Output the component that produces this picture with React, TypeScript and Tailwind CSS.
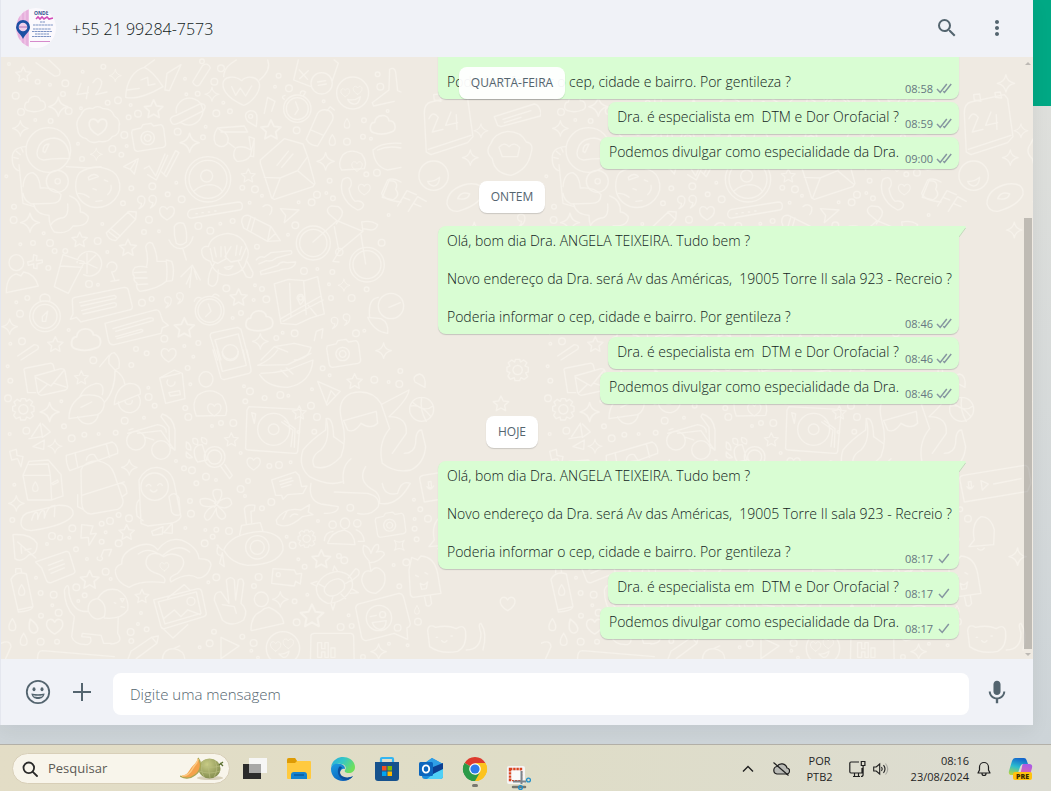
import clsx from 'clsx'
import type { ReactNode } from 'react'
import { MdMoreVert, MdSearch } from 'react-icons/md'

type Message = { id: number; text: string; time: string; read: boolean; tail?: boolean; wide?: boolean }
type Day = { label: string; floating?: boolean; messages: Message[] }

const GREETING = `Olá, bom dia Dra. ANGELA TEIXEIRA. Tudo bem ?

Novo endereço da Dra. será Av das Américas,  19005 Torre II sala 923 - Recreio ?

Poderia informar o cep, cidade e bairro. Por gentileza ?`
const ADDRESS = '\n\nPoderia informar o cep, cidade e bairro. Por gentileza ?'
const SPECIALIST = 'Dra. é especialista em  DTM e Dor Orofacial ?'
const PUBLISH = 'Podemos divulgar como especialidade da Dra.'

const days: Day[] = [
  {
    label: 'QUARTA-FEIRA',
    floating: true,
    messages: [
      { id: 1, text: ADDRESS, time: '08:58', read: true, wide: true },
      { id: 2, text: SPECIALIST, time: '08:59', read: true },
      { id: 3, text: PUBLISH, time: '09:00', read: true },
    ],
  },
  {
    label: 'ONTEM',
    messages: [
      { id: 4, text: GREETING, time: '08:46', read: true, tail: true, wide: true },
      { id: 5, text: SPECIALIST, time: '08:46', read: true },
      { id: 6, text: PUBLISH, time: '08:46', read: true },
    ],
  },
  {
    label: 'HOJE',
    messages: [
      { id: 7, text: GREETING, time: '08:17', read: false, tail: true, wide: true },
      { id: 8, text: SPECIALIST, time: '08:17', read: false },
      { id: 9, text: PUBLISH, time: '08:17', read: false },
    ],
  },
]

/* ---------- wallpaper ---------- */

const STAR = 'M0-22 L7-7 L23-5 L11 6 L14 22 L0 14 L-14 22 L-11 6 L-23-5 L-7-7 Z'
const SPARK = 'M0-26 Q3-4 26 0 Q4 4 0 26 Q-4 4-26 0 Q-4-4 0-26 Z'
const HEART = 'M0 22 C-14 14-24 4-22-8 C-20-20-6-22 0-10 C6-22 20-20 22-8 C24 4 14 14 0 22 Z'
const DROP = 'M0-18 C8-6 11 2 10 8 A10 10 0 0 1-10 8 C-11 2-8-6 0-18 Z'
const CLOUD = 'M-22 22 C-36 18-32-4-20-4 C-18-26 14-26 16-8 C34-8 36 16 22 20 C8 26-10 26-22 22 Z'
const QUOTE = 'M0-18 A11 11 0 1 0 2 4 Q2 12-6 20 Q12 12 12-6 A12 12 0 0 0 0-18 Z'
const CAMERA = 'M-46-22 L-20-28 L-14-38 L10-42 L18-34 L40-38 Q46-36 48-26 L54 20 Q54 28 46 30 L-30 42 Q-38 42-40 34 L-48-14 Z M0-18 A20 20 0 1 0 .1-18 M0-8 A10 10 0 1 0 .1-8'
const GEAR = 'M-6-32 L6-32 L9-24 L18-30 L28-22 L22-12 L32-8 L32 6 L24 9 L30 20 L20 28 L10 23 L6 32 L-8 32 L-10 23 L-22 28 L-29 18 L-23 8 L-32 4 L-32-8 L-23-12 L-28-22 L-18-30 L-9-24 Z M0-14 A14 14 0 1 0 .1-14'

type Spot = [shape: string, x: number, y: number, scale?: number, turn?: number]

const upperSpots: Spot[] = [
  [STAR, 67, 42], [STAR, 458, 146, 1.2], [STAR, 810, 208, 1.3], [STAR, 742, 346, 0.9], [STAR, 236, 538], [STAR, 381, 562, 1.1],
  [STAR, 713, 711, 1.1], [STAR, 550, 802, 1.3], [STAR, 163, 852], [SPARK, 172, 140, 1.1], [SPARK, 343, 47, 0.7], [SPARK, 58, 205, 0.9],
  [SPARK, 566, 248, 1.1], [SPARK, 633, 103, 0.8], [SPARK, 286, 283, 0.7], [SPARK, 974, 304], [SPARK, 87, 488, 1.1], [SPARK, 1029, 676, 0.7],
  [SPARK, 26, 800, 0.9], [SPARK, 778, 844, 0.9], [SPARK, 1148, 872, 0.9], [SPARK, 1440, 212, 0.8], [SPARK, 1395, 70], [SPARK, 1408, 293, 0.9],
  [HEART, 291, 199, 1.2], [HEART, 498, 458, 1], [HEART, 1068, 318, 0.7], [HEART, 1090, 387, 0.8], [HEART, 503, 884], [HEART, 1033, 97, 0.6], [HEART, 1070, 90, 0.6],
  [CLOUD, 102, 130], [CLOUD, 1145, 192, 1.2], [CLOUD, 775, 780, 1.3], [CLOUD, 255, 836, 1.4], [QUOTE, 420, 426, 1], [QUOTE, 454, 424, 1],
  [QUOTE, 500, 726, 0.9], [QUOTE, 536, 714, 0.9], [QUOTE, 1000, 788, 0.9], [QUOTE, 1036, 778, 0.9], [DROP, 1038, 190, 0.8], [DROP, 994, 240, 0.9],
  [CAMERA, 440, 232], [CAMERA, 1025, 880], [STAR, 1500, 430], [SPARK, 1420, 510, 0.9], [QUOTE, 1560, 480], [CAMERA, 1530, 640],
]
const lowerSpots: Spot[] = [
  [STAR, 241, 82, 0.9], [STAR, 1061, 93, 1], [STAR, 691, 268, 0.9], [STAR, 895, 187, 0.9], [STAR, 377, 546, 1], [STAR, 961, 626, 1.2],
  [STAR, 266, 688, 1.2], [STAR, 423, 738, 0.9], [STAR, 933, 796, 1.5], [SPARK, 146, 186, 1.1], [SPARK, 162, 289, 0.8], [SPARK, 385, 352, 0.9],
  [SPARK, 46, 460, 0.9], [SPARK, 1195, 586, 0.8, 45], [SPARK, 838, 748, 0.9], [SPARK, 1133, 905, 0.9], [HEART, 758, 340, 0.9], [HEART, 161, 828, 1.1],
  [HEART, 640, 178, 0.9], [HEART, 490, 649, 0.6], [DROP, 34, 824], [DROP, 95, 828, 1.2, -20], [DROP, 68, 868], [DROP, 62, 720, 0.9], [DROP, 103, 410, 0.8],
  [DROP, 1248, 780, 0.7], [GEAR, 67, 178], [GEAR, 917, 566, 0.8], [CAMERA, 1166, 524, 0.9], [HEART, 824, 888, 0.7], [HEART, 862, 880, 0.7],
  [STAR, 1500, 160], [GEAR, 1550, 60], [SPARK, 1430, 620], [HEART, 1520, 760],
]

const upperDots = '24,12 110,65 193,70 245,35 307,20 44,107 147,74 186,102 60,156 103,180 149,183 203,153 240,145 320,128 351,121 389,135 383,172 411,161 552,56 603,4 660,25 556,103 590,101 640,65 667,128 687,154 646,160 614,200 606,232 530,215 822,80 833,47 864,85 968,124 1130,43 1138,80 1160,153 1089,181 887,211 1110,236 1086,230 1038,245 231,251 243,297 334,267 377,258 361,284 370,225 16,349 391,385 454,379 526,368 500,403 542,418 746,428 724,383 762,388 783,407 986,362 948,404 976,399 996,415 932,427 893,427 1096,343 1128,338 1163,465 39,440 38,480 304,492 366,430 444,479 474,514 429,516 592,498 658,491 695,483 883,496 861,524 768,560 628,512 58,553 96,549 147,549 128,520 161,573 290,543 319,576 142,624 264,672 291,674 193,573 676,685 762,676 783,687 796,718 758,720 990,714 1052,714 984,673 1097,688 909,633 949,627 994,636 1142,548 46,727 79,714 57,761 203,810 452,717 423,728 695,774 720,759 881,820 845,818 826,834 1065,820 1090,812 437,880 490,836 550,858 592,849 63,844 28,851 405,867'
const lowerDots = '20,49 28,92 21,145 181,154 189,229 76,242 26,252 250,254 212,265 293,252 344,248 371,212 429,203 391,45 277,31 442,113 461,167 443,141 568,103 553,174 562,201 633,228 660,219 697,219 729,109 791,144 838,135 862,137 733,154 747,124 577,20 560,54 930,167 933,118 965,55 1120,89 1163,96 1198,63 1195,102 986,76 940,245 948,201 892,246 805,348 834,345 869,337 741,393 719,417 732,438 783,475 811,456 719,309 549,355 573,361 525,333 586,400 615,380 645,390 567,453 570,491 613,540 646,539 684,543 553,534 635,560 611,580 40,404 34,510 214,535 205,563 177,563 153,558 138,582 302,521 327,513 314,547 302,575 353,580 258,627 225,598 314,665 329,687 353,495 384,505 105,683 119,729 158,734 154,766 120,797 173,788 232,753 251,736 226,712 411,822 437,838 389,846 420,789 391,873 646,682 622,697 759,708 773,681 892,628 911,650 875,586 857,560 1014,618 1030,631 919,734 881,754 887,817 1043,796 1052,828 1019,831 1239,449 1258,478 1281,506 1241,507 1247,568 1216,637 1178,645 1195,709 1251,815 1164,881 1086,921 1190,833 1220,886 724,860 758,879 751,902 639,845 626,880 596,892 168,875 119,875 771,923 1241,536 1048,473 951,513'

const toDots = (list: string) => list.split(' ').map((pair) => pair.split(',').map(Number))

const upperLines = [
  // rocket, flaming heart, phone
  'M374 112 C376 60 400 30 430 22 L460 0 M430 22 C450 30 470 55 486 80 M374 112 C410 120 460 96 486 80 M378 90 L415 85 M420 60 L440 52 L442 76 L462 72 M505 92 L492 90 L498 40 L540 14 Z',
  'M728 136 C690 120 664 96 666 70 C668 50 700 44 722 62 C740 44 774 50 776 76 C776 98 752 128 728 136 Z M668 50 C670 20 690 10 706 0 M776 60 C800 40 808 20 800 0 M692 80 L704 106 L718 84 L734 108 L752 78',
  'M892 0 L878 60 L930 80 M1000 0 L1012 10 L994 62 M895 30 L920 58 M922 32 L896 56 M930 70 A32 32 0 1 0 994 70 A32 32 0 1 0 930 70 M950 66 L974 62 M952 76 L976 72',
  'M105 8 L160 48 Q182 50 176 30 L144 0 M575 66 L605 16 Q622 6 628 24 L596 74 Q584 84 575 66 M240 70 L228 104 L262 98 M262 80 L256 116 M276 68 Q290 44 302 64 Q304 80 284 104 L318 96',
  'M1166 28 Q1180 20 1184 36 L1190 92 L1200 96 M1166 28 L1164 90 L1114 128 L1118 138 L1180 124',
  // smiley
  'M1007 99 A48 48 0 1 0 1103 99 A48 48 0 1 0 1007 99 M1040 118 Q1060 124 1078 110 Q1074 134 1058 132 Q1046 130 1040 118',
  // medal, planet, alarm clock, bottle
  'M240 165 Q250 140 275 146 Q290 134 306 146 Q332 144 340 168 Q360 180 354 200 Q358 224 334 230 Q320 250 294 244 Q270 254 256 236 Q232 232 230 208 Q222 184 240 165 Z',
  'M526 158 A40 38 0 1 1 600 172 A40 38 0 0 1 540 188 M512 188 Q500 172 526 166 L600 130 Q620 134 608 152 L536 188 Q516 198 512 188 Z',
  'M848 146 A41 41 0 1 0 930 146 A41 41 0 1 0 848 146 M856 146 A33 33 0 1 0 922 146 A33 33 0 1 0 856 146 M884 126 L892 148 L882 164 M850 118 Q838 110 852 106 M898 100 Q900 88 914 96 L908 106',
  'M916 238 L950 160 Q962 144 984 152 Q1002 164 994 182 L950 258 Q926 256 916 238 M930 210 L968 226 M978 152 L988 140 L1000 150 M790 160 L800 112 L822 124 L812 154',
  // map pin, glasses, envelope
  'M766 200 L740 184 Q724 160 748 152 Q770 152 768 176 Z M743 169 A6 6 0 1 0 755 169 A6 6 0 1 0 743 169',
  'M650 204 Q632 230 644 252 Q662 268 678 252 Q688 232 670 216 Q656 210 650 204 L730 198 L740 216 L660 216 M682 248 L700 262 M704 264 Q690 290 708 304 Q736 306 748 288 L760 236 L744 230 L750 270 Q724 254 704 264 M748 288 L758 290 L760 236',
  'M778 300 L850 236 L906 252 L920 290 L942 370 L936 380 L820 418 L812 414 L778 310 Z M790 352 L838 354 L890 332 L920 290 M838 354 L816 412 M890 332 L940 374 M828 316 L862 274 M842 322 L876 282',
  'M368 320 L412 296 L400 342 L388 328 Z M388 328 L404 304 M430 326 L444 318 L464 348 L492 282 M440 344 L466 360 L500 286 M482 336 L496 350 L534 278 L524 272 L490 340',
  // astronaut
  'M75 270 A67 67 0 1 0 209 270 A67 67 0 1 0 75 270 M108 280 Q112 236 160 234 Q204 240 206 296 Q160 294 128 300 Q108 298 108 280 M126 274 Q126 252 144 252 L132 278 Z',
  'M75 260 Q30 262 34 300 Q34 324 52 332 M60 262 L66 276 M46 274 L58 284 M38 292 L52 296 M54 314 L66 430 L100 440 M66 380 Q70 338 96 338 Q116 350 118 384 Q160 380 180 404 Q180 430 150 430 L90 432 Q68 420 66 400',
  'M136 364 A33 33 0 1 0 202 364 A33 33 0 1 0 136 364 M162 364 A8 8 0 1 0 178 364 A8 8 0 1 0 162 364 M98 432 Q104 464 144 466 Q144 500 160 516 Q200 524 216 498 Q262 500 262 470 Q250 456 238 456 Q240 420 206 408 M200 432 Q204 474 180 474 Q160 478 150 494 M196 320 L262 324 L300 320',
  // cookie, avatar
  'M236 338 Q262 320 300 322 Q344 330 352 356 Q366 390 340 420 Q310 450 268 440 Q226 424 224 380 Q224 352 236 338 Z M262 352 Q280 336 292 350 L264 360 Z M310 360 l10 4 M276 386 l10 4 M232 400 Q250 400 264 412 M320 404 Q334 390 330 376 M285 424 l18 -2',
  'M553 358 A68 68 0 1 0 689 358 A68 68 0 1 0 553 358 M564 358 A57 57 0 1 0 678 358 A57 57 0 1 0 564 358 M599 348 A18 18 0 1 0 635 348 A18 18 0 1 0 599 348 M580 392 Q600 374 630 374 Q656 378 664 394',
  // password bar, crayons
  'M572 448 L712 426 Q724 426 724 438 Q724 450 716 450 L574 474 Q560 476 560 462 Q562 450 572 448 Z M585 461 h4 M603 458 h4 M622 456 h4 M641 453 h4',
  'M316 518 L384 454 L406 456 L404 478 L344 542 Q320 540 316 518 M330 506 L358 528 M324 516 L350 536 M380 456 L402 476 M722 486 Q722 464 742 466 L810 500 L838 542 L800 544 L728 504 Z M750 470 L738 510 M762 474 L750 516 M808 502 L800 542 L824 520',
  // call, paper plane
  'M1026 358 Q1044 346 1050 362 Q1054 376 1044 386 Q1048 412 1062 424 Q1082 420 1088 434 Q1086 448 1070 450 Q1036 434 1024 400 Q1018 370 1026 358 Z M838 446 L894 450 L850 488 L854 466 Z M786 440 Q800 428 812 442 Q814 456 806 464',
  'M1116 270 Q1140 246 1200 250 M1116 270 Q1120 320 1160 330 L1200 322 M1130 270 Q1160 256 1200 264 M1022 330 Q1008 312 1026 284 Q1050 264 1082 282 Q1100 306 1090 326 Z M1160 360 Q1176 352 1200 366 M1160 360 L1142 400 Q1150 422 1200 426',
  // bicycle
  'M886 549 A51 51 0 1 0 988 549 A51 51 0 1 0 886 549 M896 549 A41 41 0 1 0 978 549 A41 41 0 1 0 896 549 M1046 614 A52 52 0 1 0 1150 614 A52 52 0 1 0 1046 614 M1056 614 A42 42 0 1 0 1140 614 A42 42 0 1 0 1056 614',
  'M936 546 L1008 482 L1086 514 L1014 574 L1000 500 M1008 482 L984 462 Q972 446 990 438 L1012 440 Q1030 452 1022 468 L1006 492 M1086 514 L1082 486 Q1110 480 1130 494 Q1126 510 1110 510 L1086 506 M1080 524 L1094 612 M1014 574 L996 604 L1014 606 M1004 576 A11 11 0 1 0 1026 576 A11 11 0 1 0 1004 576',
  // drink, thumb up, mic
  'M186 584 L160 680 L202 700 L250 606 L186 584 M178 618 L244 622 M228 608 A37 37 0 1 1 248 644 M236 610 L258 610 L284 586 M258 610 L288 624 M258 610 V580 M258 610 V640 M318 622 A15 15 0 1 1 332 636 L342 662 M330 664 L354 660',
  'M436 622 Q444 600 434 560 Q440 542 454 550 Q468 578 468 604 L496 604 Q500 640 496 664 Q470 688 416 694 Q404 684 408 670 Q396 662 400 650 Q390 636 402 622 Q420 616 438 622 M400 638 L436 636 M400 654 L438 654 M406 674 L440 672 M496 600 L512 604 Q522 630 514 662 L496 664',
  'M520 500 Q528 484 548 490 Q560 512 556 546 Q540 560 526 550 Q518 526 520 500 M504 540 Q516 566 540 566 Q570 560 576 530 M546 568 L556 600 M540 650 L574 616 L598 660 M572 622 L566 682 M580 632 L588 658 M556 672 L570 640',
  // monkey and hand
  'M622 560 Q630 526 680 520 Q724 524 736 560 Q748 580 736 602 Q730 640 682 646 Q640 646 628 604 Q600 596 602 570 Q608 556 622 560 M640 610 Q620 640 622 672 Q640 690 650 660 L652 630 M712 604 L736 650 Q756 660 756 638 L738 604 M628 566 L636 604 L650 610 L676 596 L672 560 M640 562 L646 590 M660 560 L660 590 M690 560 L672 590 L690 606 L720 600 L736 562 M708 556 L704 586 M722 560 L716 584 M670 622 Q684 636 696 618 Z',
  'M766 600 Q776 586 790 592 L810 578 L870 572 Q878 582 862 584 L826 594 Q812 606 796 602 L774 612 M778 634 L830 616 Q840 602 858 608 L884 606 Q884 620 862 626 Q840 628 834 632 L780 644 Z',
  // card, chat bubbles, map
  'M16 698 Q16 650 46 642 L60 648 L68 636 Q100 640 112 678 L16 698 M24 608 A22 24 0 1 0 68 608 A22 24 0 1 0 24 608 M80 606 L96 602 L98 584 L108 588 L106 602 L124 600 L124 608 L108 612 L108 626 L98 624 L98 612 L82 616 Z',
  'M214 720 Q214 714 222 712 L370 682 Q380 682 382 690 L394 740 Q394 748 386 750 L240 786 L226 772 L208 778 L216 762 Z M236 728 L340 706 Q350 710 342 716 L240 738 M242 752 L340 728 Q350 730 344 740 L246 762',
  'M312 790 L464 750 Q476 748 480 768 L486 784 L502 796 L484 804 L480 820 L340 854 Q326 856 322 840 Z M336 806 L446 774 Q460 772 456 782 L344 814 M344 830 L420 808 Q430 810 422 816 L348 836',
  'M820 672 L862 658 L912 662 L950 650 L970 762 L930 774 L886 794 L840 790 Z M840 776 L960 708 M846 784 L966 720 M866 670 l4 100 M908 664 l8 100 M922 736 L948 768 M888 714 Q890 700 904 704 Q916 718 898 734 Z M893 714 A6 6 0 1 0 905 714 A6 6 0 1 0 893 714',
  // compass, clock, mobile, flower
  'M86 769 A46 46 0 1 0 178 769 A46 46 0 1 0 86 769 M96 769 A36 36 0 1 0 168 769 A36 36 0 1 0 96 769 M124 770 L140 754 L134 784 L124 784 Z M118 724 Q112 704 132 702 Q152 706 146 724',
  'M583 752 A43 43 0 1 0 669 752 A43 43 0 1 0 583 752 M591 752 A35 35 0 1 0 661 752 A35 35 0 1 0 591 752 M622 732 L630 754 L614 770 M580 724 Q586 706 602 716 M634 710 Q640 696 654 708',
  'M628 830 Q626 820 636 818 L710 802 L720 808 L744 900 M628 830 L650 900 M642 840 L712 822 L732 900 M642 840 L660 900 M664 878 A24 24 0 1 0 712 878 A24 24 0 1 0 664 878',
  'M1132 738 A38 38 0 1 0 1208 738 M1132 738 A38 38 0 0 1 1208 738 M1132 712 Q1100 716 1106 772 M1100 772 Q1120 816 1160 820 Q1164 788 1140 776 Z M1164 742 L1198 728',
  'M780 900 L820 860 L880 850 L930 862 Q920 900 880 900 M820 860 L860 876 M50 888 L100 854 Q118 856 110 868 L60 900 M940 842 L946 814 L966 806 L962 834',
  // calendar, second smiley, donut, initials
  'M1270 160 Q1270 130 1290 126 L1390 104 L1400 116 L1416 230 L1400 248 L1290 284 L1276 276 Z M1282 268 L1410 226 M1300 120 L1298 104 L1316 102 L1320 124 Z M1364 112 L1362 98 L1378 96 L1382 114 Z M1284 176 Q1296 150 1312 172 L1294 216 L1326 208 M1350 156 L1334 196 L1370 188 M1366 164 L1368 208',
  'M1254 347 A44 44 0 1 0 1342 347 A44 44 0 1 0 1254 347 M1280 364 Q1300 366 1316 352 Q1314 378 1298 378 Q1284 376 1280 364 M1338 432 Q1338 386 1400 372 Q1450 366 1446 404 Q1430 438 1370 454 Q1346 456 1338 432 M1370 416 Q1380 392 1406 402 Q1400 422 1370 416',
  'M1144 412 L1164 362 Q1196 362 1184 388 Q1200 406 1176 420 Z M1190 438 L1218 392 L1246 404 M1206 412 L1226 420 M1222 454 L1250 410 L1276 424 M1240 432 L1260 440',
  'M1480 170 L1600 132 Q1616 134 1620 160 L1618 168 L1500 200 L1490 196 Z M1506 178 L1590 152 M1510 188 L1560 172 M1470 250 Q1480 220 1520 214 Q1560 214 1576 246 Q1600 250 1590 280 Q1580 330 1530 346 Q1480 340 1474 296 Q1450 274 1470 250 M1494 262 Q1510 244 1524 260 Q1540 244 1556 262 L1550 290 L1504 290 Z',
]

const lowerLines = [
  // envelopes, scooter
  'M70 64 Q66 56 76 54 L146 40 Q156 38 158 50 L160 58 M70 64 L80 128 L104 128 M102 78 L180 56 Q190 56 192 64 L200 110 Q200 116 194 120 L120 136 Q112 134 110 128 Z M104 82 L150 108 L190 60 M112 130 L138 104 M198 112 L160 100',
  'M204 204 Q204 160 244 136 Q300 130 310 156 Q310 184 290 194 L204 206 M236 140 Q250 108 286 100 Q312 100 304 134 M310 158 Q344 120 342 60 L324 40 Q320 10 340 8 Q360 24 354 54 L342 60 M296 50 L324 16 M342 60 Q368 76 372 104 M340 160 Q346 110 384 100 Q420 100 418 132 L340 164 M352 156 A33 33 0 1 0 412 136 M372 152 A11 11 0 1 0 394 152 M230 200 A32 32 0 0 0 292 194 M240 172 L272 156',
  // contact card, person, turntable
  'M476 84 L520 60 L544 70 L552 146 L494 160 Z M476 84 L536 70 M500 90 A12 12 0 1 0 522 96 M504 128 L536 122 L538 134 L508 138 Z M594 88 A21 23 0 1 0 636 88 A21 23 0 1 0 594 88 M586 198 Q570 160 590 136 Q628 108 664 138 Q684 170 674 196 Z',
  'M744 170 L894 178 Q900 180 900 190 L890 304 Q888 312 880 310 L742 300 Q732 300 734 290 L738 180 Z M770 238 A48 48 0 1 0 866 238 A48 48 0 1 0 770 238 M802 238 A16 16 0 1 0 834 238 A16 16 0 1 0 802 238 M842 216 L876 240 L870 290 M850 212 L882 236 L880 292 M752 188 L764 192 L760 220 Z',
  'M636 0 L660 84 Q664 90 672 88 L744 70 Q752 66 750 58 L738 0 M648 0 L664 64 L736 46 L726 0 M664 4 A24 24 0 0 0 712 4 M770 46 Q810 30 830 0 M770 46 L860 44 L930 10 M780 70 Q820 70 860 60 L936 30 Q930 100 860 112 Q800 112 776 74 M840 60 L860 80 M856 54 L876 72',
  // octopus
  'M1022 210 Q1006 150 1050 130 Q1110 114 1140 160 L1166 236 Q1130 280 1144 340 Q1180 370 1230 360 Q1270 340 1274 290 L1262 240 Q1244 240 1244 280 Q1240 310 1210 310 M1022 210 Q1040 270 1020 320 Q980 364 940 350 Q926 320 960 300 Q990 270 976 206 Q996 200 998 260 L1026 280',
  'M976 206 L974 240 Q930 270 906 300 Q890 350 926 380 Q980 410 1024 396 M1028 400 Q1020 350 1050 326 M1028 212 L1126 184 L1130 220 Q1110 240 1080 220 Q1060 250 1040 240 Z M1144 162 L1224 120 Q1220 150 1164 200 Q1220 200 1216 250 L1174 310 M930 400 Q920 450 960 462 L1012 470 Q1012 490 970 490 M1000 426 L1100 430 Q1140 440 1132 470 Q1110 500 1070 490 M1094 350 Q1070 390 1110 416 Q1140 430 1136 460 Q1190 470 1228 400 Q1200 390 1190 430 Q1150 440 1144 400',
  // plane, pin, ball
  'M950 94 L1018 124 L978 166 Z M976 162 L990 122 L1004 138 M1272 112 L1242 96 Q1232 78 1256 72 Q1276 76 1272 112 M1226 178 A36 36 0 1 0 1298 178 A36 36 0 1 0 1226 178 M1228 168 Q1260 160 1290 200 M1262 142 Q1256 180 1276 214 M1234 156 Q1270 190 1296 168',
  // snips, bolt, milk
  'M92 260 L118 220 L124 260 L84 266 M124 222 L148 246 L124 262 M96 290 L130 270 L128 298 Z M26 304 L46 298 L48 316 L66 320 L60 350 L50 326 L32 330 Z M66 376 L84 334 L142 330 L180 374 L186 438 L152 450 L80 450 Z M66 376 L148 376 L152 450 M148 376 L142 344 M84 344 L142 342 M152 400 L170 390 L172 396 L156 404 Z',
  // backpack, binoculars, paw, magnifier
  'M196 316 L334 276 Q352 286 350 310 L206 362 Q194 340 196 316 M222 308 L230 350 M316 282 L326 322 M242 460 L240 360 Q250 334 290 332 Q330 340 340 372 L366 450 Q368 470 350 478 L270 492 Q244 490 242 460 M242 436 L370 396 M230 434 L230 470 L246 478 M356 400 Q376 398 378 430 L364 440 M256 330 Q260 310 280 314 L290 330',
  'M377 272 A28 28 0 1 0 433 272 A28 28 0 1 0 377 272 M452 300 A28 28 0 1 0 508 300 A28 28 0 1 0 452 300 M380 250 L470 224 Q496 228 496 246 M396 236 L384 240 M434 262 L458 270 M484 192 Q516 200 522 240 L522 300 L506 290 L504 232 L480 200 Z M410 250 L480 242 L520 300',
  'M580 300 Q584 284 604 284 L618 330 L590 336 Q578 320 580 300 M610 321 A31 31 0 1 0 672 321 A31 31 0 1 0 610 321 M620 321 A21 21 0 1 0 662 321 A21 21 0 1 0 620 321 M660 350 L686 386 L694 376 L672 344 M556 284 Q552 300 570 300 Q570 280 556 276 Z M576 266 Q572 284 590 284 Q594 262 576 266 M602 262 Q598 280 616 282 Q624 266 602 262 M556 306 Q552 330 574 322 Z',
  // penguin, flower, post, fish
  'M420 520 L414 390 Q430 354 466 352 Q510 356 520 400 L540 500 Q530 518 506 520 L440 528 Z M420 410 A41 41 0 1 0 502 410 A41 41 0 1 0 420 410 M436 408 q8 -10 14 0 M470 406 q8 -10 14 0 M448 420 q10 12 20 0 M504 440 Q520 420 534 444 L538 494 Q520 500 512 486 Z M414 450 Q402 460 408 498 L426 512 M452 544 L486 530 L484 552 L456 556 Z M488 548 L514 520 L514 550 Z',
  'M646 456 Q620 410 660 420 Q668 440 650 456 Q690 430 692 462 Q680 480 652 470 Q690 500 662 508 Q644 500 646 474 Q620 530 610 500 Q612 480 640 468 Q592 476 598 448 Q620 440 644 458 M640 460 l14 10 M654 456 l-14 16',
  'M812 390 L884 366 L894 376 L902 410 L918 408 L906 430 L860 434 L846 448 L842 436 L824 436 Z M836 394 L872 384 M838 404 L876 392 M842 412 L870 404 M826 510 Q850 470 900 480 L926 464 L922 486 L936 494 L904 500 Q860 540 828 522 Z M846 508 L858 484 M868 500 Q876 488 890 494',
  // submarine
  'M668 600 Q690 550 780 544 Q850 550 846 600 Q830 644 740 646 Q690 640 668 600 Z M734 592 A35 35 0 1 0 804 592 A35 35 0 1 0 734 592 M748 592 A21 21 0 1 0 790 592 A21 21 0 1 0 748 592 M716 554 L722 526 L778 518 L786 544 M736 520 L730 476 Q736 462 762 466 L760 482 L750 484 L752 518 M664 600 Q640 580 652 586 Q640 620 666 616 M664 608 L670 650 L656 640 Z',
  // bread, leaf, comment
  'M60 520 Q60 490 90 486 L170 466 Q220 464 216 494 Q200 526 90 542 Q60 540 60 520 M92 510 Q100 480 110 490 L110 508 Q120 474 130 484 L130 504 Q140 466 162 466 L160 500 M36 554 Q90 550 108 580 Q110 614 84 614 Q60 640 42 626 Z M50 576 L104 624 M60 590 L62 610 M72 600 L90 596 M242 524 L276 528 L268 552 L286 550 L264 586 L262 562 L240 564 Z',
  'M104 636 L196 604 Q204 604 206 612 L222 664 Q222 670 216 672 L150 698 Q140 700 136 690 L122 654 Z M142 646 L186 630 M144 660 L190 642 M150 670 L190 654 M290 622 A8 6 0 1 0 300 620 L308 600 L332 598 L324 618 M30 688 Q44 662 76 672 L96 770 Q92 784 52 786 Z M44 668 L44 656 L60 656 L62 668 M50 780 L96 770',
  // hands making a heart
  'M344 672 Q338 650 362 642 Q360 610 400 592 Q450 570 470 600 Q500 560 540 570 Q590 590 594 626 Q630 626 630 646 Q620 684 590 684 Q560 664 510 696 Q500 680 530 670 Q560 640 540 620 Q510 604 488 620 Q460 600 440 620 Q424 650 460 668 Q500 680 490 698 Q420 690 384 712 Q350 700 344 672 M412 612 Q440 590 474 612 M486 616 Q530 576 566 606',
  // dog, photo, peace hand
  'M190 720 Q204 690 204 730 Q216 790 262 784 M190 720 Q190 770 220 800 L212 860 Q220 886 260 884 Q274 878 268 862 L242 860 L244 850 L300 856 L308 880 L330 880 M262 784 Q258 750 290 746 Q320 760 310 800 Q280 820 262 784 M290 746 Q310 710 350 720 Q386 740 380 780 Q360 810 310 804 M352 800 L350 850 Q370 880 330 882 M358 746 l12 0 l-6 10 Z M340 758 l4 2 M360 770 l10 2',
  'M458 750 L590 716 Q600 716 602 724 L616 790 Q616 798 608 800 L490 836 Q482 838 480 830 Z M472 756 L586 726 L600 790 L492 822 Z M488 806 L520 780 L540 800 L560 780 L598 794 M558 754 A12 12 0 1 0 582 754 A12 12 0 1 0 558 754 M500 744 L550 704 L566 720 M480 830 L516 864 L560 824',
  'M640 750 Q640 724 660 726 L684 760 L676 690 Q690 676 700 690 L704 750 L712 690 Q726 680 728 700 L720 760 Q744 780 728 810 Q690 834 664 810 Z M664 764 L700 770 L706 790 M750 840 Q750 796 780 784 L790 776 L804 772 Q846 790 848 820 L752 842 M760 748 A21 22 0 1 0 802 748 A21 22 0 1 0 760 748',
  // camcorder, group, turtle, plant
  'M816 656 L880 660 L886 672 L902 670 L898 702 L884 694 L880 708 L812 700 Z M826 674 A6 6 0 1 0 838 674 A6 6 0 1 0 826 674 M980 580 Q990 546 1030 540 Q1060 550 1062 584 Z M1018 520 A14 16 0 1 0 1046 520 A14 16 0 1 0 1018 520 M984 524 A11 11 0 1 0 1006 524 A11 11 0 1 0 984 524 M1058 520 A11 11 0 1 0 1080 520 A11 11 0 1 0 1058 520 M970 572 Q972 546 996 544 M1066 540 Q1086 546 1090 574 L1072 574',
  'M946 712 Q960 670 1010 664 Q1060 670 1054 712 Q1030 760 980 760 Q946 748 946 712 M970 716 Q980 690 1012 686 Q1036 692 1030 716 Q1010 740 986 738 Q968 732 970 716 M1042 684 L1064 656 Q1080 660 1072 676 L1050 694 M946 708 L930 700 L948 694 M996 662 L1000 648 L1010 664 M1052 716 L1072 728 L1048 730 M990 760 L996 780 L1002 760 M972 712 L950 700 M1034 700 L1052 690 M996 740 L990 760 M1020 732 L1034 746',
  'M1082 690 Q1086 656 1110 664 Q1128 640 1150 670 Q1160 710 1124 730 Q1090 730 1082 690 M1110 664 L1104 632 Q1080 610 1088 586 Q1106 590 1110 610 Q1120 580 1132 584 Q1136 600 1126 606 Q1150 600 1150 614 Q1130 640 1104 638',
  // popsicle, laughing bubble, sign
  'M1224 660 L1232 622 L1250 630 L1260 618 Q1300 620 1310 670 L1320 730 L1236 742 Q1228 740 1228 730 Z M1270 738 L1276 766 Q1286 772 1292 760 L1288 736 M1244 676 l8 4 M1272 668 l8 4 M1258 700 Q1270 710 1280 696 L1276 716 L1262 718 Z',
  'M1064 774 Q1066 764 1074 762 L1194 730 Q1204 730 1208 742 L1228 820 Q1228 830 1218 834 L1220 868 L1180 850 L1096 872 Q1086 872 1082 862 Z M1096 804 A38 38 0 1 0 1172 804 A38 38 0 1 0 1096 804 M1114 818 L1156 812 Q1154 838 1136 838 Q1120 836 1114 818 M1108 800 l18 -4 M1136 794 A9 9 0 1 0 1154 794 A9 9 0 1 0 1136 794',
  'M928 950 L930 856 Q932 850 940 850 L1050 850 Q1058 852 1058 860 L1060 950 M950 878 L962 878 V896 L972 896 V878 L982 878 V922 L972 922 V906 L962 906 V922 L950 922 Z M990 894 L1002 894 V922 L990 922 Z M796 895 A50 50 0 1 0 896 895 A50 50 0 1 0 796 895 M834 912 Q850 914 864 904 Q860 924 846 922 Z',
  'M380 930 L390 904 L452 862 L472 858 L468 880 L406 926 M452 862 L466 878 M660 862 L714 888 L660 926 Z M484 930 Q486 896 518 896 L536 888 M518 896 Q550 900 552 930 M110 930 Q108 902 124 902 L340 920 M0 880 Q28 868 30 890 L14 926',
  // voice note, bell, cat
  'M1256 386 Q1256 378 1266 376 L1450 346 Q1462 346 1464 360 L1470 400 L1460 424 L1270 456 Z M1282 396 L1290 394 L1292 412 L1284 414 Z M1278 410 Q1288 426 1298 408 M1320 392 L1342 402 L1324 420 Z M1358 402 L1440 386 M1284 590 L1300 570 Q1290 520 1320 500 Q1350 500 1360 540 L1358 584 Z M1310 596 Q1320 606 1330 594',
  'M1280 842 Q1282 820 1304 832 Q1340 824 1366 836 Q1390 820 1394 846 Q1398 890 1370 904 Q1320 914 1286 890 Z M1306 862 h4 M1350 858 h4 M1322 872 q8 10 16 0 M1396 900 Q1440 900 1440 850 Q1430 820 1440 820 Q1460 850 1446 900',
]

function Doodles({ spots, dots, lines }: { spots: Spot[]; dots: string; lines: string[] }) {
  return (
    <>
      {lines.map((d) => <path key={d} d={d} />)}
      {spots.map(([shape, x, y, scale = 1, turn = 0]) => (
        <path key={`${x}-${y}`} d={shape} transform={`translate(${x} ${y}) rotate(${turn}) scale(${scale})`} />
      ))}
      {toDots(dots).map(([x, y], i) => <circle key={i} cx={x} cy={y} r={4 + ((i * 7) % 3) * 3} />)}
    </>
  )
}

function Wallpaper() {
  return (
    <svg className="absolute inset-0 size-full" aria-hidden="true">
      <defs>
        <pattern id="doodles" width="540" height="640" patternUnits="userSpaceOnUse">
          <g fill="none" stroke="#f6f2eb" strokeWidth="4" strokeLinejoin="round" strokeLinecap="round">
            <g transform="translate(0 3) scale(.3333)">
              <Doodles spots={upperSpots} dots={upperDots} lines={upperLines} />
            </g>
            <g transform="translate(0 293) scale(.3333)">
              <Doodles spots={lowerSpots} dots={lowerDots} lines={lowerLines} />
            </g>
          </g>
        </pattern>
      </defs>
      <rect width="100%" height="100%" fill="url(#doodles)" />
    </svg>
  )
}

/* ---------- chat ---------- */

function Ticks({ read }: { read: boolean }) {
  return (
    <svg width="16" height="11" viewBox="0 0 16 11" fill="none" stroke="#8696a0" strokeWidth="1.5" aria-hidden="true">
      {read ? <path d="M1 6l3.2 3.4L10.8 1M7.2 8.2l1.3 1.2L15.2 1" /> : <path d="M3 6l3.2 3.4L12.8 1" />}
    </svg>
  )
}

function Bubble({ message }: { message: Message }) {
  const lines = message.text.split('\n')

  return (
    <div
      className={clsx(
        'relative grid shrink-0 self-end rounded-lg bg-[#d9fdd3] pt-[5px] pr-[7px] pb-[5px] pl-[9px] shadow-[0_1px_1px_rgba(11,20,26,0.18)]',
        message.wide && 'min-w-[521px]',
        message.tail && 'rounded-tr-none',
      )}
    >
      {message.tail && (
        <svg className="absolute top-0 left-full" width="8" height="13" viewBox="0 0 8 13" aria-hidden="true">
          <path d="M0 0h5.6c1.4 0 1.8 1 1 2L0 11z" fill="#d9fdd3" />
          <path d="M6.6 2L0 11" stroke="#c3d9bd" strokeWidth="1" />
        </svg>
      )}
      <p className="col-start-1 row-start-1 pb-[3px] text-[14px] leading-[19px] font-light whitespace-pre-wrap text-[#111b21]">
        {lines.map((line, i) => (
          <span key={i} className="block min-h-[19px]">
            {line}
            {i === lines.length - 1 && <span className="inline-block w-[53px]" />}
          </span>
        ))}
      </p>
      <span className="col-start-1 row-start-1 flex items-center gap-[3px] self-end justify-self-end text-[11px] leading-[11px] text-[#667781]">
        {message.time}
        <Ticks read={message.read} />
      </span>
    </div>
  )
}

function DayLabel({ children, floating }: { children: ReactNode; floating?: boolean }) {
  return (
    <div
      className={clsx(
        'flex h-8 items-center rounded-lg px-3 text-[12px] text-[#54656f] shadow-[0_1px_1px_rgba(11,20,26,0.16)]',
        floating ? 'bg-white/95' : 'mt-[9px] mb-[10px] shrink-0 self-center bg-white',
      )}
    >
      {children}
    </div>
  )
}

function Avatar() {
  return (
    <svg width="40" height="40" viewBox="0 0 40 40" role="img" aria-label="Foto do perfil">
      <clipPath id="avatar"><circle cx="20" cy="20" r="20" /></clipPath>
      <g clipPath="url(#avatar)">
        <rect width="40" height="40" fill="#fbf9fd" />
        <path d="M0 0h13v40H0z" fill="#edbfe4" />
        <path d="M3 0v40M7 0v40M11 0v40" stroke="#dfa2d6" strokeWidth="1" />
        <path d="M7 12a7 7 0 0 1 7 7c0 5-5 7-7 12-2-5-7-7-7-12a7 7 0 0 1 7-7z" fill="#1c50a3" />
        <circle cx="7" cy="19" r="4.3" fill="#f0cfea" />
        <path d="M3 19h8" stroke="#b072b5" />
        <text x="18" y="7" fontSize="5" fontWeight="700" fill="#31508f">ONDE</text>
        <path d="M20 11l2-2 2 2 2-2 2 2 3-2 2 2 4-1" stroke="#d14bb8" strokeWidth="1.6" fill="none" />
        <path d="M24 14h5M17 17h20M17 21h18M16 23.5h20M19 26h14M16 28.5h19" stroke="#7d93c4" strokeWidth="1.1" strokeDasharray="2.5 .4" />
        <path d="M14 33.5h20" stroke="#d58acb" />
      </g>
    </svg>
  )
}

function Chat() {
  return (
    <main className="mr-[18px] mb-[19px] flex min-h-0 flex-1 flex-col border-l border-[#e4e7ef] bg-[#f0f2f5] shadow-[0_6px_18px_rgba(11,20,26,0.06)]">
      <header className="flex h-[57px] shrink-0 items-center bg-[#f0f2f7] pr-6 pb-[2px] pl-[15px]">
        <Avatar />
        <h1 className="ml-4 flex-1 pt-[2px] text-[16px] font-light text-[#111b21]">+55 21 99284-7573</h1>
        <button type="button" aria-label="Pesquisar na conversa" className="mr-[26px] text-[#54656f]"><MdSearch size={24} /></button>
        <button type="button" aria-label="Mais opções" className="text-[#54656f]"><MdMoreVert size={24} /></button>
      </header>

      <section className="relative flex min-h-0 flex-1 overflow-hidden bg-[#efeae2]">
        <Wallpaper />
        <div className="relative flex flex-1 flex-col justify-end gap-[3px] px-16 pb-5">
          {days.map((day) => (
            <div key={day.label} className="contents">
              {!day.floating && <DayLabel>{day.label}</DayLabel>}
              {day.messages.map((m) => <Bubble key={m.id} message={m} />)}
            </div>
          ))}
          <div className="absolute inset-x-0 top-[10px] flex justify-center">
            <DayLabel floating>{days[0].label}</DayLabel>
          </div>
        </div>
        <div className="relative flex w-[10px] flex-col items-center" aria-hidden="true">
          <span className="mt-[5px] size-0 border-x-[3px] border-b-[3px] border-x-transparent border-b-[#bdb9b4]" />
          <span className="flex-26" />
          <span className="w-2 flex-73 bg-black/20" />
          <span className="mt-1 mb-[3px] size-0 border-x-[3px] border-t-[3px] border-x-transparent border-t-[#bdb9b4]" />
        </div>
      </section>

      <footer className="flex h-[66px] shrink-0 items-center bg-[#f0f2f7] pr-6 pl-6 text-[#54656f]">
        <button type="button" aria-label="Emojis">
          <svg width="26" height="26" viewBox="0 0 26 26">
            <circle cx="13" cy="13" r="11.2" fill="none" stroke="currentColor" strokeWidth="1.8" />
            <ellipse cx="9" cy="10.3" rx="1.5" ry="2" fill="currentColor" />
            <ellipse cx="17" cy="10.3" rx="1.5" ry="2" fill="currentColor" />
            <path d="M6.4 14.5q6.6 1.6 13.2 0c-.4 3.4-3 5.5-6.6 5.500s-6.200-2.100-6.600-5.500z" fill="currentColor" />
            <path d="M8.2 16.3q4.8 1 9.600 0l-.8 1.200q-4 .9-8 0z" fill="#f0f2f7" />
          </svg>
        </button>
        <button type="button" aria-label="Anexar" className="ml-[21px]">
          <svg width="20" height="20" viewBox="0 0 20 20"><path d="M10 1v18M1 10h18" stroke="currentColor" strokeWidth="2" /></svg>
        </button>
        <input
          type="text"
          aria-label="Mensagem"
          placeholder="Digite uma mensagem"
          className="mt-1 mr-4 ml-[21px] h-[42px] min-w-0 flex-1 rounded-lg bg-white px-[17px] text-[15px] font-light text-[#111b21] outline-none placeholder:text-[#54656f]"
        />
        <button type="button" aria-label="Gravar áudio">
          <svg width="24" height="24" viewBox="0 0 24 24" fill="currentColor">
            <path d="M11.999 14.942c2.001 0 3.531-1.530 3.531-3.531V4.350c0-2.001-1.530-3.531-3.531-3.531S8.469 2.350 8.469 4.350v7.061c0 2.001 1.530 3.531 3.530 3.531zm6.238-3.530c0 3.531-2.942 6.002-6.237 6.002s-6.237-2.471-6.237-6.002H3.761c0 4.001 3.178 7.297 7.061 7.885v3.884h2.354v-3.884c3.884-.588 7.061-3.884 7.061-7.885h-2z" />
          </svg>
        </button>
      </footer>
    </main>
  )
}

/* ---------- taskbar ---------- */

function Melon() {
  return (
    <svg width="44" height="24" viewBox="0 0 44 24" aria-hidden="true">
      <defs>
        <radialGradient id="melon" cx=".4" cy=".3" r=".8"><stop stopColor="#c9cc86" /><stop offset="1" stopColor="#7c8648" /></radialGradient>
      </defs>
      <ellipse cx="30" cy="21" rx="13" ry="2" fill="#d8d0ba" />
      <ellipse cx="29.5" cy="11.5" rx="11" ry="10" fill="url(#melon)" />
      <path d="M24 3q-5 8 0 17M30 2q-3 9 0 19M35 4q4 8-1 16M20 8q9 4 20 1M19 14q10 4 21 0" stroke="#b9bd80" strokeWidth=".7" fill="none" />
      <path d="M39 8l4-3M40 6l3 3" stroke="#5c7132" strokeWidth="1.3" />
      <path d="M18 1c4 5 3 13-3 17-5 4-11 4-15 1 6 0 8-3 11-8 3-4 6-5 7-10z" fill="#f4a24c" />
      <path d="M0 19c5 3 10 3 15-1 6-4 7-12 3-17" fill="none" stroke="#a8a754" strokeWidth="1.3" />
      <path d="M2 19c6 0 9-4 11-8s5-5 5-9" fill="none" stroke="#fbc983" strokeWidth="1.5" />
    </svg>
  )
}

const apps: { name: string; icon: ReactNode; open?: boolean; low?: boolean }[] = [
  {
    name: 'Visão de tarefas',
    icon: (
      <>
        <path d="M6 1h18v15H6z" fill="#f6f6f5" />
        <path d="M0 7h18v15H0z" fill="#2b2b2b" />
        <path d="M6 7h12v9H6z" fill="#a8a8a7" />
      </>
    ),
  },
  {
    name: 'Explorador de Arquivos',
    icon: (
      <>
        <path d="M0 3q0-2 2-2h6l2 3h13q1 0 1 1v16q0 1-1 1H1q-1 0-1-1z" fill="#ffca3f" />
        <path d="M0 3q0-2 2-2h6l2 3-2 2H0z" fill="#dd9b05" />
        <path d="M4 22v-4q0-3 3-3h10q3 0 3 3v4z" fill="#1583cf" />
        <path d="M7 18h10" stroke="#0c5b9c" strokeWidth="1.5" />
      </>
    ),
  },
  {
    name: 'Microsoft Edge',
    icon: (
      <>
        <defs>
          <linearGradient id="edgeTop" x1="0" y1="0" x2="1" y2=".5"><stop stopColor="#27a9e0" /><stop offset=".5" stopColor="#35c7c5" /><stop offset="1" stopColor="#6fe05b" /></linearGradient>
          <linearGradient id="edgeLow" x1="0" y1="0" x2=".7" y2="1"><stop stopColor="#1c9de2" /><stop offset="1" stopColor="#0b5fb8" /></linearGradient>
        </defs>
        <path d="M0 10C1 4 6 0 12 0c7 0 12 5 12 10 0 4-3 6-6 6-3 0-5-1-4-3 2-2 0-6-4-6-4-1-8 1-10 3z" fill="url(#edgeTop)" />
        <path d="M0 12c0-4 4-6 8-5 4 0 6 2 6 5-1-1-5 0-5 4 0 5 7 7 13 3-2 3-6 5-10 5C5 24 0 19 0 12z" fill="url(#edgeLow)" />
        <path d="M8 10c-3 5 0 12 6 13 4 0 7-2 8-4-6 3-13 1-13-4 0-2 1-3 2-4 0-1-2-2-3-1z" fill="#0d4f9c" />
      </>
    ),
  },
  {
    name: 'Microsoft Store',
    icon: (
      <>
        <path d="M6 6V2q0-1 1-1h10q1 0 1 1v4" fill="none" stroke="#33b5f1" strokeWidth="2.2" />
        <path d="M0 5h24v16q0 3-3 3H3q-3 0-3-3z" fill="#16528d" />
        <path d="M7 9h4.500v4.500H7z" fill="#f25022" /><path d="M12.5 9H17v4.500h-4.500z" fill="#7fba00" />
        <path d="M7 14.5h4.500V19H7z" fill="#00a4ef" /><path d="M12.5 14.5H17V19h-4.500z" fill="#ffb900" />
      </>
    ),
  },
  {
    name: 'Outlook',
    icon: (
      <>
        <path d="M3 8L13 1l11 6v12q0 3-3 3H6q-3 0-3-3z" fill="#1c8ddc" />
        <path d="M3 8L13 1l11 6-10 7z" fill="#2f9fe6" />
        <path d="M24 9v10q0 3-3 3H8z" fill="#4fd0f6" />
        <path d="M14 10l10-4v6l-10 5z" fill="#0c3f91" />
        <rect y="5" width="14" height="14" rx="1.5" fill="#0c66bd" />
        <ellipse cx="7" cy="12" rx="3.2" ry="3.6" fill="none" stroke="#fff" strokeWidth="1.9" />
      </>
    ),
  },
  {
    name: 'Google Chrome',
    open: true,
    icon: (
      <>
        <path d="M12 12L1.6 6A12 12 0 0 1 22.4 6z" fill="#dd3a2d" />
        <path d="M12 12L22.4 6A12 12 0 0 1 12 24z" fill="#fcc31e" />
        <path d="M12 12v12A12 12 0 0 1 1.6 6z" fill="#2b9b48" />
        <path d="M12 6h10.4A12 12 0 0 1 12 24l5.2-9z" fill="#fcc31e" />
        <path d="M1.6 6L7 15a6 6 0 0 0 10.2 0L12 24A12 12 0 0 1 1.6 6z" fill="#2b9b48" />
        <circle cx="12" cy="12" r="5.8" fill="#fff" /><circle cx="12" cy="12" r="4.6" fill="#2f7bea" />
      </>
    ),
  },
  {
    name: 'Ferramenta de Captura',
    low: true,
    icon: (
      <>
        <rect width="18" height="18" rx="2" fill="#f5f5f5" />
        <rect x="3" y="3" width="11" height="11" fill="none" stroke="#d9411e" strokeWidth="2.4" strokeDasharray="2.4 .8" />
        <rect x="5" y="5" width="9" height="9" fill="#fafafa" />
        <path d="M6 21h12" stroke="#74766f" strokeWidth="2.5" strokeLinecap="round" />
        <path d="M14.5 5v13M6 15.5h13" stroke="#7b848b" strokeWidth="2" />
        <circle cx="21.5" cy="14" r="1.9" fill="none" stroke="#1f8fc9" strokeWidth="1.3" />
        <circle cx="13.5" cy="21.5" r="1.9" fill="none" stroke="#1f8fc9" strokeWidth="1.3" />
      </>
    ),
  },
]

function Taskbar() {
  return (
    <nav className="flex h-[47px] shrink-0 items-center border-t border-[#b3b0a8] bg-linear-to-r from-[#e3ddc6] via-[#dfddc7] to-[#dcdcd2] pt-[1px] pr-[17px] pl-3 text-[11px] text-[#1f1f1f]">
      <label className="flex h-[31px] w-[218px] items-center rounded-full border border-[#d8cfb8] bg-[#f8f5eb] pr-[5px] pl-[9px]">
        <svg width="16" height="16" viewBox="0 0 16 16" fill="none" stroke="#2a2a2a" strokeWidth="1.8" aria-hidden="true">
          <circle cx="6.8" cy="6.8" r="5.3" /><path d="M10.8 10.8L15 15" strokeLinecap="round" />
        </svg>
        <input type="search" aria-label="Pesquisar" placeholder="Pesquisar" className="ml-[10px] min-w-0 flex-1 text-[13px] outline-none placeholder:text-[#5c5a55]" />
        <Melon />
      </label>
      <div className="ml-[3px] flex flex-1">
        {apps.map((app) => (
          <button key={app.name} type="button" aria-label={app.name} className={clsx('relative flex h-[45px] w-11 justify-center', app.low ? 'items-end pb-[1px]' : 'items-center')}>
            <svg width="24" height="24" viewBox="0 0 24 24" className="overflow-visible">{app.icon}</svg>
            {app.open && <span className="absolute bottom-[4px] h-[3px] w-[6px] rounded-full bg-[#77776f]" />}
          </button>
        ))}
      </div>
      <button type="button" aria-label="Mostrar ícones ocultos" className="mr-[18px]">
        <svg width="12" height="8" viewBox="0 0 12 8" fill="none" stroke="currentColor" strokeWidth="1.4"><path d="M1 6.5l5-5 5 5" /></svg>
      </button>
      <button type="button" aria-label="OneDrive" className="mr-4">
        <svg width="18" height="14" viewBox="0 0 18 14" fill="#b9bab5" stroke="currentColor" strokeWidth="1.2">
          <path d="M5 12h9a3 3 0 0 0 1-6 5.500 5.500 0 0 0-10-1.500A3.800 3.800 0 0 0 5 12z" /><path d="M1.5 .5l15 13" />
        </svg>
      </button>
      <button type="button" className="w-[27px] text-center leading-4">POR<br />PTB2</button>
      <button type="button" aria-label="Rede e volume" className="ml-4 flex items-center gap-[7px]">
        <svg width="17" height="18" viewBox="0 0 17 18" fill="none" stroke="currentColor" strokeWidth="1.2">
          <path d="M10 2H2Q.8 2 .8 3.2v8.600Q.8 13 2 13h11V8M4 16.5h7M5.5 13v3.500M9.5 13v3.500M12.3 1.5h3.600v4h-3.600zM14.1 5.5v9q0 2-2.100 2" />
        </svg>
        <svg width="16" height="14" viewBox="0 0 16 14" fill="none" stroke="currentColor" strokeWidth="1.1">
          <path d="M.7 5h2.500l3.500-3v10L3.2 9H.7zM8.5 5q1.500 2 0 4M10.5 3.2q3 3.800 0 7.600" /><path d="M12.5 1.5q4.500 5.500 0 11" stroke="#a9a9a2" />
        </svg>
      </button>
      <button type="button" className="ml-[18px] w-[62px] text-right leading-4">08:16<br />23/08/2024</button>
      <button type="button" aria-label="Notificações" className="ml-2">
        <svg width="14" height="16" viewBox="0 0 14 16" fill="none" stroke="currentColor" strokeWidth="1.2">
          <path d="M1 12l1.500-3V6a4.500 4.500 0 0 1 9 0v3L13 12zM5 12.5a2 2 0 0 0 4 0" strokeLinejoin="round" />
        </svg>
      </button>
      <button type="button" aria-label="Copilot" className="ml-[17px]">
        <svg width="26" height="24" viewBox="0 0 26 24">
          <defs>
            <linearGradient id="copilotA" x1=".5" y1="0" x2=".2" y2="1"><stop stopColor="#1467cc" /><stop offset=".5" stopColor="#2bbccf" /><stop offset="1" stopColor="#b9d63c" /></linearGradient>
            <linearGradient id="copilotB" x1=".6" y1="0" x2=".4" y2="1"><stop stopColor="#a95be8" /><stop offset="1" stopColor="#f0689c" /></linearGradient>
          </defs>
          <path d="M7 1h9q2 0 2.500 2L20 7h-5q-2 0-3 3l-2 6q-1 2-3 2H4q-4 0-3-4L4 4q1-3 3-3z" fill="url(#copilotA)" />
          <path d="M15 7h6q4 0 3 4l-2 7q-1 3-4 3h-6q-1-1 0-3l2-8q0-2 1-3z" fill="url(#copilotB)" />
          <rect x="5" y="15" width="19" height="8" rx="2" fill="#ffc20e" />
          <text x="14.5" y="21.5" textAnchor="middle" fontSize="7" fontWeight="800" fill="#3a2a00">PRE</text>
        </svg>
      </button>
    </nav>
  )
}

export default function App() {
  return (
    <div className="flex h-screen flex-col font-['Segoe_UI','Open_Sans',sans-serif]">
      <div className="relative flex min-h-0 flex-1 flex-col bg-linear-to-b from-[#e1e1dc] to-[#cdd4d8]">
        <div className="absolute inset-x-0 top-0 h-[106px] bg-[#00a884]" />
        <div className="relative flex min-h-0 flex-1 flex-col">
          <Chat />
        </div>
      </div>
      <Taskbar />
    </div>
  )
}
